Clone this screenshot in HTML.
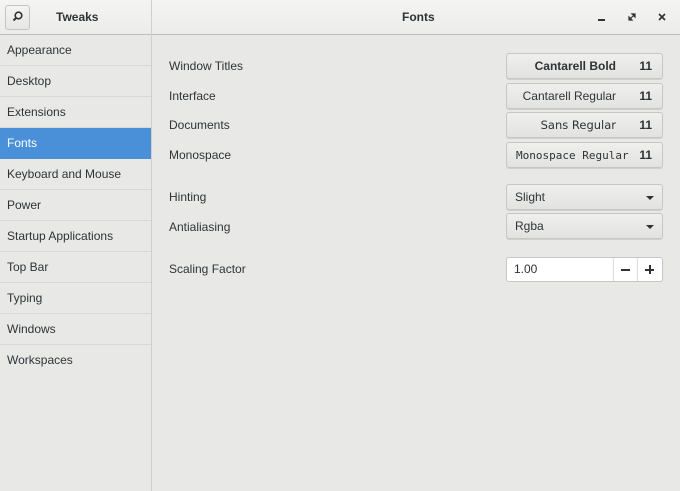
<!DOCTYPE html>
<html><head><meta charset="utf-8"><style>
*{box-sizing:border-box;margin:0;padding:0}
body{width:680px;height:491px;overflow:hidden;background:#e8e8e7;font-family:"Liberation Sans",sans-serif;font-size:12px;color:#2e3436;position:relative}
.hdr{position:absolute;left:0;top:0;width:680px;height:35px;background:linear-gradient(#f4f4f3,#ececeb);border-bottom:1px solid #bdbdbb}
.vs{position:absolute;left:151px;top:0;width:1px;height:491px;background:#cfcfcd}
.srch{position:absolute;left:5px;top:5px;width:25px;height:25px;border:1px solid #c4c4c2;border-radius:3px;background:linear-gradient(#f4f4f3,#e6e6e5)}
.t{position:absolute;font-weight:bold;font-size:12px;top:10px}
.side{position:absolute;left:0;top:35px;width:151px}
.side div{height:31px;line-height:31px;padding-left:7px;border-bottom:1px solid #d8d8d6}
.side .sel{background:#4a90d9;color:#fff;border-bottom-color:#4a90d9}
.lbl{position:absolute;left:169px}
.btn{position:absolute;left:506px;width:157px;height:26px;border:1px solid #c6c6c4;border-radius:3px;background:linear-gradient(#efefee,#e2e2e1);box-shadow:0 1px 0 #d0d0ce}
.btn .n{position:absolute;right:10px;top:5px;font-weight:bold}
.btn .f{position:absolute;right:46px;top:5px}
.dd .v{position:absolute;left:8px;top:5px}
.dd .a{position:absolute;right:8px;top:11px;width:0;height:0;border-left:4px solid transparent;border-right:4px solid transparent;border-top:4px solid #2e3436}
.spin{position:absolute;left:506px;top:257px;width:157px;height:25px;border:1px solid #c6c6c4;border-radius:3px;background:#fff}
</style></head><body>
<div class="hdr"></div>
<div class="vs"></div>
<div class="srch"><svg width="23" height="23" viewBox="0 0 23 23"><circle cx="12.5" cy="9.5" r="3.3" fill="none" stroke="#2e3436" stroke-width="1.6"/><line x1="10.2" y1="11.8" x2="7.5" y2="14.5" stroke="#2e3436" stroke-width="2"/></svg></div>
<div class="t" style="left:56px">Tweaks</div>
<div class="t" style="left:402px">Fonts</div>
<div style="position:absolute;left:598px;top:19px;width:7px;height:2px;background:#2e3436"></div>
<svg style="position:absolute;left:627px;top:12px" width="10" height="10" viewBox="0 0 10 10"><path d="M5 2h3v3zM5 8H2V5z M3 7l4-4" fill="#2e3436" stroke="#2e3436" stroke-width="1.2"/></svg>
<svg style="position:absolute;left:657px;top:12px" width="10" height="10" viewBox="0 0 10 10"><path d="M2 2l6 6M8 2l-6 6" stroke="#2e3436" stroke-width="1.6"/></svg>
<div class="side">
<div>Appearance</div><div>Desktop</div><div>Extensions</div><div class="sel">Fonts</div><div>Keyboard and Mouse</div><div>Power</div><div>Startup Applications</div><div>Top Bar</div><div>Typing</div><div>Windows</div><div style="border-bottom:none">Workspaces</div>
</div>
<div class="lbl" style="top:59px">Window Titles</div>
<div class="lbl" style="top:89px">Interface</div>
<div class="lbl" style="top:118px">Documents</div>
<div class="lbl" style="top:148px">Monospace</div>
<div class="lbl" style="top:190px">Hinting</div>
<div class="lbl" style="top:220px">Antialiasing</div>
<div class="lbl" style="top:262px">Scaling Factor</div>
<div class="btn" style="top:53px"><span class="f" style="font-weight:bold">Cantarell Bold</span><span class="n">11</span></div>
<div class="btn" style="top:83px"><span class="f">Cantarell Regular</span><span class="n">11</span></div>
<div class="btn" style="top:112px"><span class="f" style="font-family:'DejaVu Sans',sans-serif;font-size:11.5px">Sans Regular</span><span class="n">11</span></div>
<div class="btn" style="top:142px"><span class="f" style="font-family:'DejaVu Sans Mono','Liberation Mono',monospace;font-size:11px;right:30px;left:9px;top:6px">Monospace Regular</span><span class="n">11</span></div>
<div class="btn dd" style="top:184px"><span class="v">Slight</span><span class="a"></span></div>
<div class="btn dd" style="top:213px"><span class="v">Rgba</span><span class="a"></span></div>
<div class="spin"><span style="position:absolute;left:7px;top:4px">1.00</span>
<div style="position:absolute;left:106px;top:0;width:1px;height:23px;background:#dcdcda"></div>
<div style="position:absolute;left:130px;top:0;width:1px;height:23px;background:#dcdcda"></div>
<div style="position:absolute;left:114px;top:11px;width:9px;height:1.5px;background:#2e3436"></div>
<div style="position:absolute;left:138px;top:11px;width:9px;height:1.5px;background:#2e3436"></div>
<div style="position:absolute;left:142px;top:7px;width:1.5px;height:9px;background:#2e3436"></div>
</div>
</body></html>
